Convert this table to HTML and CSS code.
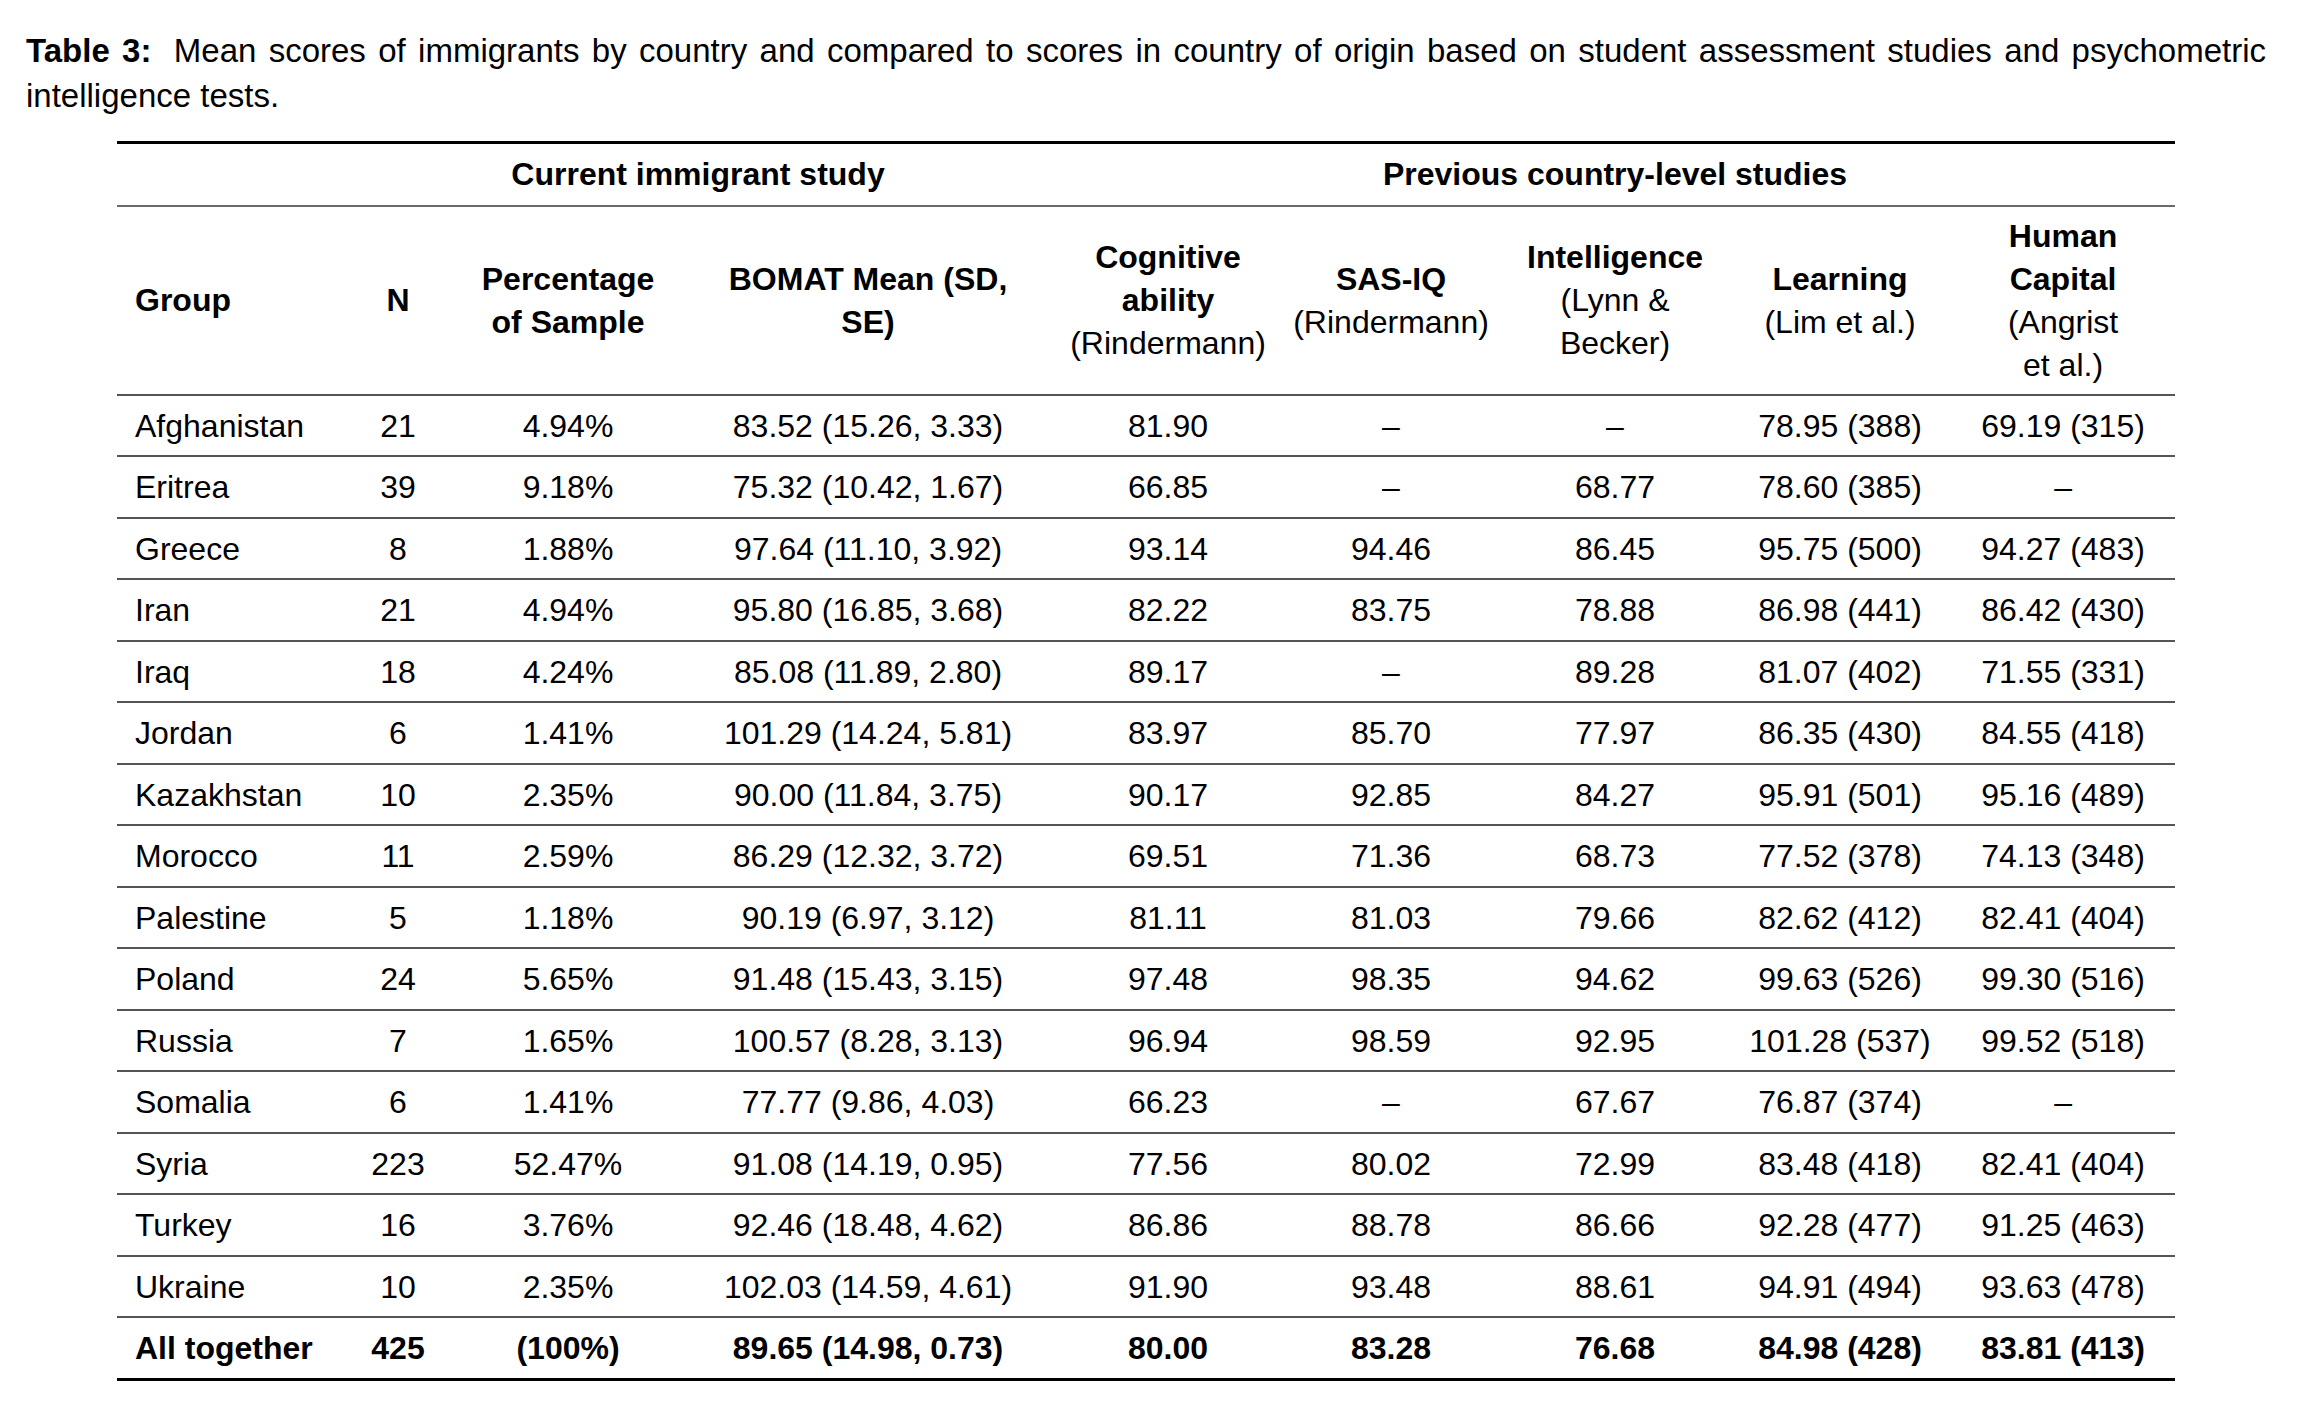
FILE: index.html
```html
<!DOCTYPE html>
<html lang="en">
<head>
<meta charset="utf-8">
<title>Table 3</title>
<link rel="stylesheet" href="styles.css">
</head>
<body>
<p class="caption"><b class="label">Table 3:</b> Mean scores of immigrants by country and compared to scores in country of origin based on student assessment studies and psychometric intelligence tests.</p>
<table class="scores">
  <colgroup>
    <col class="c-group"><col class="c-n"><col class="c-pct"><col class="c-bomat"><col class="c-cog"><col class="c-sas"><col class="c-int"><col class="c-learn"><col class="c-hc">
  </colgroup>
  <thead>
    <tr class="grp">
      <th></th>
      <th colspan="3">Current immigrant study</th>
      <th colspan="5">Previous country-level studies</th>
    </tr>
    <tr class="hdr">
      <th class="first">Group</th>
      <th>N</th>
      <th>Percentage<br>of Sample</th>
      <th>BOMAT Mean (SD,<br>SE)</th>
      <th>Cognitive<br>ability<br><span class="src">(Rindermann)</span></th>
      <th>SAS-IQ<br><span class="src">(Rindermann)</span></th>
      <th>Intelligence<br><span class="src">(Lynn &amp;<br>Becker)</span></th>
      <th>Learning<br><span class="src">(Lim et al.)</span></th>
      <th>Human<br>Capital<br><span class="src">(Angrist<br>et al.)</span></th>
    </tr>
  </thead>
  <tbody>
    <tr><td class="first">Afghanistan</td><td>21</td><td>4.94%</td><td>83.52 (15.26, 3.33)</td><td>81.90</td><td>–</td><td>–</td><td>78.95 (388)</td><td>69.19 (315)</td></tr>
    <tr><td class="first">Eritrea</td><td>39</td><td>9.18%</td><td>75.32 (10.42, 1.67)</td><td>66.85</td><td>–</td><td>68.77</td><td>78.60 (385)</td><td>–</td></tr>
    <tr><td class="first">Greece</td><td>8</td><td>1.88%</td><td>97.64 (11.10, 3.92)</td><td>93.14</td><td>94.46</td><td>86.45</td><td>95.75 (500)</td><td>94.27 (483)</td></tr>
    <tr><td class="first">Iran</td><td>21</td><td>4.94%</td><td>95.80 (16.85, 3.68)</td><td>82.22</td><td>83.75</td><td>78.88</td><td>86.98 (441)</td><td>86.42 (430)</td></tr>
    <tr><td class="first">Iraq</td><td>18</td><td>4.24%</td><td>85.08 (11.89, 2.80)</td><td>89.17</td><td>–</td><td>89.28</td><td>81.07 (402)</td><td>71.55 (331)</td></tr>
    <tr><td class="first">Jordan</td><td>6</td><td>1.41%</td><td>101.29 (14.24, 5.81)</td><td>83.97</td><td>85.70</td><td>77.97</td><td>86.35 (430)</td><td>84.55 (418)</td></tr>
    <tr><td class="first">Kazakhstan</td><td>10</td><td>2.35%</td><td>90.00 (11.84, 3.75)</td><td>90.17</td><td>92.85</td><td>84.27</td><td>95.91 (501)</td><td>95.16 (489)</td></tr>
    <tr><td class="first">Morocco</td><td>11</td><td>2.59%</td><td>86.29 (12.32, 3.72)</td><td>69.51</td><td>71.36</td><td>68.73</td><td>77.52 (378)</td><td>74.13 (348)</td></tr>
    <tr><td class="first">Palestine</td><td>5</td><td>1.18%</td><td>90.19 (6.97, 3.12)</td><td>81.11</td><td>81.03</td><td>79.66</td><td>82.62 (412)</td><td>82.41 (404)</td></tr>
    <tr><td class="first">Poland</td><td>24</td><td>5.65%</td><td>91.48 (15.43, 3.15)</td><td>97.48</td><td>98.35</td><td>94.62</td><td>99.63 (526)</td><td>99.30 (516)</td></tr>
    <tr><td class="first">Russia</td><td>7</td><td>1.65%</td><td>100.57 (8.28, 3.13)</td><td>96.94</td><td>98.59</td><td>92.95</td><td>101.28 (537)</td><td>99.52 (518)</td></tr>
    <tr><td class="first">Somalia</td><td>6</td><td>1.41%</td><td>77.77 (9.86, 4.03)</td><td>66.23</td><td>–</td><td>67.67</td><td>76.87 (374)</td><td>–</td></tr>
    <tr><td class="first">Syria</td><td>223</td><td>52.47%</td><td>91.08 (14.19, 0.95)</td><td>77.56</td><td>80.02</td><td>72.99</td><td>83.48 (418)</td><td>82.41 (404)</td></tr>
    <tr><td class="first">Turkey</td><td>16</td><td>3.76%</td><td>92.46 (18.48, 4.62)</td><td>86.86</td><td>88.78</td><td>86.66</td><td>92.28 (477)</td><td>91.25 (463)</td></tr>
    <tr><td class="first">Ukraine</td><td>10</td><td>2.35%</td><td>102.03 (14.59, 4.61)</td><td>91.90</td><td>93.48</td><td>88.61</td><td>94.91 (494)</td><td>93.63 (478)</td></tr>
    <tr class="total"><td class="first">All together</td><td>425</td><td>(100%)</td><td>89.65 (14.98, 0.73)</td><td>80.00</td><td>83.28</td><td>76.68</td><td>84.98 (428)</td><td>83.81 (413)</td></tr>
  </tbody>
</table>
</body>
</html>
```

FILE: styles.css
```css
html, body {
  margin: 0;
  padding: 0;
  background: #ffffff;
}

body {
  font-family: "Liberation Sans", Arial, sans-serif;
  color: #000000;
}

.caption {
  margin: 0;
  padding: 28px 42px 0 26px;
  font-size: 33px;
  line-height: 45px;
  text-align: justify;
}

.label {
  margin-right: 10px;
}

.scores {
  margin: 23px 0 0 117px;
  width: 2058px;
  table-layout: fixed;
  border-collapse: collapse;
  font-size: 32px;
  border-top: 3px solid #000;
  border-bottom: 3px solid #000;
}

.c-group { width: 224px; }
.c-n { width: 114px; }
.c-pct { width: 226px; }
.c-bomat { width: 374px; }
.c-cog { width: 226px; }
.c-sas { width: 220px; }
.c-int { width: 228px; }
.c-learn { width: 222px; }
.c-hc { width: 224px; }

.scores th,
.scores td {
  padding: 0;
  text-align: center;
  vertical-align: middle;
  white-space: nowrap;
}

.scores th {
  font-weight: bold;
  line-height: 43px;
}

.grp th {
  height: 61px;
  border-bottom: 2px solid #6a6a6a;
}

.hdr th {
  height: 187px;
  border-bottom: 2px solid #555;
}

.src {
  font-weight: normal;
}

.scores td {
  height: 59px;
  line-height: 34px;
  border-bottom: 2px solid #555;
}

.scores tbody tr:nth-child(even) td {
  height: 60px;
}

.scores .first {
  text-align: left;
  padding-left: 18px;
}

.total td {
  font-weight: bold;
  border-bottom: 3px solid #000;
}
```
